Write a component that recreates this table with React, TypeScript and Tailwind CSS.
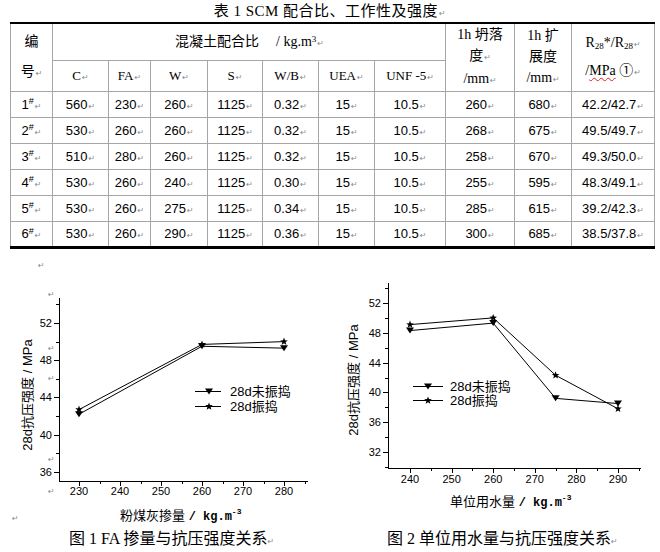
import React from "react"

const serif = "font-['Liberation_Serif','Noto_Sans_CJK_SC',serif]"
const sans = "font-['Liberation_Sans','Noto_Sans_CJK_SC',sans-serif]"

const Ret = () => <span className="ml-px font-['DejaVu_Sans'] text-[8px] text-[#8a8a8a]">↵</span>

const rows = [
  ["1", "560", "230", "260", "1125", "0.32", "15", "10.5", "260", "680", "42.2/42.7"],
  ["2", "530", "260", "260", "1125", "0.32", "15", "10.5", "268", "675", "49.5/49.7"],
  ["3", "510", "280", "260", "1125", "0.32", "15", "10.5", "258", "670", "49.3/50.0"],
  ["4", "530", "260", "240", "1125", "0.30", "15", "10.5", "255", "595", "48.3/49.1"],
  ["5", "530", "260", "275", "1125", "0.34", "15", "10.5", "285", "615", "39.2/42.3"],
  ["6", "530", "260", "290", "1125", "0.36", "15", "10.5", "300", "685", "38.5/37.8"],
]

const colWidths = ["w-[42px]", "w-[56px]", "w-[42px]", "w-[57px]", "w-[55px]", "w-[56px]", "w-[56px]", "w-[71px]", "w-[69px]", "w-[57px]", "w-[83px]"]
const subHeads = ["C", "FA", "W", "S", "W/B", "UEA", "UNF -5"]

const cell = "border border-[#a6a6a6] p-0 text-center font-normal align-middle"

function starPoints(cx: number, cy: number, r: number) {
  const pts: string[] = []
  for (let i = 0; i < 10; i++) {
    const rad = i % 2 === 0 ? r : r * 0.42
    const a = -Math.PI / 2 + (i * Math.PI) / 5
    pts.push(`${(cx + rad * Math.cos(a)).toFixed(1)},${(cy + rad * Math.sin(a)).toFixed(1)}`)
  }
  return pts.join(" ")
}

const triPoints = (x: number, y: number) => `${x - 4},${y - 3} ${x + 4},${y - 3} ${x},${y + 3}`

interface ChartSpec {
  vb: string
  left: number
  right: number
  top: number
  bottom: number
  x: (v: number) => number
  y: (v: number) => number
  xMajor: number[]
  xMinor: number[]
  yMajor: number[]
  yMinor: number[]
  tri: [number, number][]
  star: [number, number][]
  legend: { x1: number; x2: number; mx: number; tx: number; y1: number; y2: number }
  yTitle: [number, number]
  xTitle: { x: number; y: number; text: string }
  xLabelY: number
  caption: { x: number; y: number; text: string }
  strays: [number, number][]
}

function Chart({ spec }: { spec: ChartSpec }) {
  const { x, y, legend } = spec
  const line = (pts: [number, number][]) => pts.map(([a, b]) => `${x(a)},${y(b)}`).join(" ")
  const numFont = "Liberation Sans, sans-serif"
  const cjk = "Liberation Sans, Noto Sans CJK SC, sans-serif"
  return (
    <svg width={330} height={302} viewBox={spec.vb} className="block">
      <g stroke="#000" strokeWidth={1} fill="none" shapeRendering="crispEdges">
        <line x1={spec.left + 0.5} y1={spec.top} x2={spec.left + 0.5} y2={spec.bottom + 0.5} />
        <line x1={spec.left} y1={spec.bottom + 0.5} x2={spec.right} y2={spec.bottom + 0.5} />
        {spec.yMajor.map((v) => (
          <line key={"ym" + v} x1={spec.left - 5} y1={Math.round(y(v)) + 0.5} x2={spec.left} y2={Math.round(y(v)) + 0.5} />
        ))}
        {spec.yMinor.map((v) => (
          <line key={"yn" + v} x1={spec.left - 3} y1={Math.round(y(v)) + 0.5} x2={spec.left} y2={Math.round(y(v)) + 0.5} />
        ))}
        {spec.xMajor.map((v) => (
          <line key={"xm" + v} x1={Math.round(x(v)) + 0.5} y1={spec.bottom} x2={Math.round(x(v)) + 0.5} y2={spec.bottom + 5} />
        ))}
        {spec.xMinor.map((v) => (
          <line key={"xn" + v} x1={Math.round(x(v)) + 0.5} y1={spec.bottom} x2={Math.round(x(v)) + 0.5} y2={spec.bottom + 3} />
        ))}
      </g>
      <g fontFamily={numFont} fontSize={11} fill="#000">
        {spec.yMajor.map((v) => (
          <text key={"yl" + v} x={spec.left - 7} y={y(v) + 4} textAnchor="end">{v}</text>
        ))}
        {spec.xMajor.map((v) => (
          <text key={"xl" + v} x={x(v)} y={spec.xLabelY} textAnchor="middle">{v}</text>
        ))}
      </g>
      <g stroke="#000" strokeWidth={1} fill="none">
        <polyline points={line(spec.tri)} />
        <polyline points={line(spec.star)} />
      </g>
      <g fill="#000">
        {spec.tri.map(([a, b]) => (
          <polygon key={"t" + a} points={triPoints(x(a), y(b))} />
        ))}
        {spec.star.map(([a, b]) => (
          <polygon key={"s" + a} points={starPoints(x(a), y(b), 4)} />
        ))}
      </g>
      <g stroke="#000" strokeWidth={1} shapeRendering="crispEdges">
        <line x1={legend.x1} y1={legend.y1 + 0.5} x2={legend.x2} y2={legend.y1 + 0.5} />
        <line x1={legend.x1} y1={legend.y2 + 0.5} x2={legend.x2} y2={legend.y2 + 0.5} />
      </g>
      <polygon points={triPoints(legend.mx, legend.y1 + 0.5)} fill="#000" />
      <polygon points={starPoints(legend.mx, legend.y2 + 0.5, 4)} fill="#000" />
      <g fontFamily={cjk} fontSize={13} fill="#000">
        <text x={legend.tx} y={legend.y1 + 5}>28d未振捣</text>
        <text x={legend.tx} y={legend.y2 + 5}>28d振捣</text>
        <text
          x={spec.yTitle[0]}
          y={spec.yTitle[1]}
          textAnchor="middle"
          dominantBaseline="central"
          transform={`rotate(-90 ${spec.yTitle[0]} ${spec.yTitle[1]})`}
        >
          28d抗压强度 / MPa
        </text>
        <text x={spec.xTitle.x} y={spec.xTitle.y}>
          {spec.xTitle.text}
          <tspan fontFamily="Liberation Mono, monospace" fontWeight="bold" fontSize={12}> / kg.m</tspan>
          <tspan fontFamily="Liberation Mono, monospace" fontWeight="bold" fontSize={8} dy={-6}>-3</tspan>
        </text>
      </g>
      <text x={spec.caption.x} y={spec.caption.y} fontFamily="Liberation Serif, Noto Sans CJK SC, serif" fontSize={16} fill="#000">
        {spec.caption.text}
        <tspan fontFamily="DejaVu Sans" fontSize={8} fill="#8a8a8a">↵</tspan>
      </text>
      <g fontFamily="DejaVu Sans" fontSize={8} fill="#8a8a8a">
        {spec.strays.map(([a, b], i) => (
          <text key={i} x={a} y={b}>↵</text>
        ))}
      </g>
    </svg>
  )
}

const chart1: ChartSpec = {
  vb: "0 250 330 302",
  left: 59,
  right: 308,
  top: 298,
  bottom: 481,
  x: (v) => 79 + (v - 230) * 4.1,
  y: (v) => 323 + (52 - v) * 9.31,
  xMajor: [230, 240, 250, 260, 270, 280],
  xMinor: [235, 245, 255, 265, 275, 285],
  yMajor: [36, 40, 44, 48, 52],
  yMinor: [38, 42, 46, 50, 54],
  tri: [[230, 42.2], [260, 49.5], [280, 49.3]],
  star: [[230, 42.7], [260, 49.7], [280, 50.0]],
  legend: { x1: 195, x2: 221, mx: 209, tx: 230, y1: 391, y2: 406 },
  yTitle: [27, 395],
  xTitle: { x: 120, y: 520, text: "粉煤灰掺量 " },
  xLabelY: 495,
  caption: { x: 69, y: 544, text: "图 1 FA 掺量与抗压强度关系" },
  strays: [[48, 297], [48, 351], [48, 381], [48, 462], [48, 494], [12, 521]],
}

const chart2: ChartSpec = {
  vb: "330 250 330 302",
  left: 388,
  right: 641,
  top: 283,
  bottom: 468,
  x: (v) => 410 + (v - 240) * 4.16,
  y: (v) => 303 + (52 - v) * 7.45,
  xMajor: [240, 250, 260, 270, 280, 290],
  xMinor: [245, 255, 265, 275, 285, 295],
  yMajor: [32, 36, 40, 44, 48, 52],
  yMinor: [30, 34, 38, 42, 46, 50, 54],
  tri: [[240, 48.3], [260, 49.3], [275, 39.2], [290, 38.5]],
  star: [[240, 49.1], [260, 50.0], [275, 42.3], [290, 37.8]],
  legend: { x1: 413, x2: 443, mx: 428, tx: 450, y1: 386, y2: 400 },
  yTitle: [353, 380],
  xTitle: { x: 450, y: 506, text: "单位用水量 " },
  xLabelY: 483,
  caption: { x: 387, y: 544, text: "图 2 单位用水量与抗压强度关系" },
  strays: [],
}

export default function App() {
  return (
    <div className={`relative flex h-[552px] w-[660px] flex-col overflow-hidden bg-white text-black ${sans}`}>
      <div className={`h-[22px] text-center text-[15px] leading-[22px] tracking-[0.5px] ${serif}`}>
        表 1 SCM 配合比、工作性及强度<Ret />
      </div>
      <div className="pl-[10px]">
        <table className="w-[644px] table-fixed border-collapse text-[13px]">
          <colgroup>
            {colWidths.map((w, i) => (
              <col key={i} className={w} />
            ))}
          </colgroup>
          <thead>
            <tr className="h-[37px]">
              <th rowSpan={2} className={`${cell} border-t-2 border-t-black text-[14px] leading-[30px]`}>
                编<br />号<Ret />
              </th>
              <th colSpan={7} className={`${cell} border-t-2 border-t-black pl-[122px] text-left text-[14px] ${serif}`}>
                混凝土配合比<span className="ml-[17px]">/ kg.m<sup className="text-[9px]">3</sup></span><Ret />
              </th>
              <th rowSpan={2} className={`${cell} border-t-2 border-t-black text-[14px] leading-[21px] ${serif}`}>
                1h 坍落<br />度<Ret /><br />/mm<Ret />
              </th>
              <th rowSpan={2} className={`${cell} border-t-2 border-t-black text-[14px] leading-[21px] ${serif}`}>
                1h 扩<br />展度<br />/mm<Ret />
              </th>
              <th rowSpan={2} className={`${cell} border-t-2 border-t-black text-[14px] leading-[26px] ${serif}`}>
                R<sub className="text-[9px]">28</sub>*/R<sub className="text-[9px]">28</sub><Ret />
                <br />/<span className="underline decoration-[#e02020] decoration-wavy decoration-1 underline-offset-2">MPa</span> ①<Ret />
              </th>
            </tr>
            <tr className="h-[31px]">
              {subHeads.map((h) => (
                <th key={h} className={`${cell} text-[13px] ${serif}`}>
                  {h}<Ret />
                </th>
              ))}
            </tr>
          </thead>
          <tbody>
            {rows.map((r, ri) => (
              <tr key={ri} className="h-[26px]">
                {r.map((v, ci) => (
                  <td key={ci} className={`${cell} ${ri === rows.length - 1 ? "border-b-[3px] border-b-black" : ""}`}>
                    {ci === 0 ? (
                      <>
                        {v}
                        <sup className="text-[9px]">#</sup>
                      </>
                    ) : (
                      v
                    )}
                    <Ret />
                  </td>
                ))}
              </tr>
            ))}
          </tbody>
        </table>
      </div>
      <div className="mt-auto flex h-[302px]">
        <Chart spec={chart1} />
        <Chart spec={chart2} />
      </div>
      <div className="absolute left-[38px] top-[260px] font-['DejaVu_Sans'] text-[8px] text-[#8a8a8a]">↵</div>
    </div>
  )
}
